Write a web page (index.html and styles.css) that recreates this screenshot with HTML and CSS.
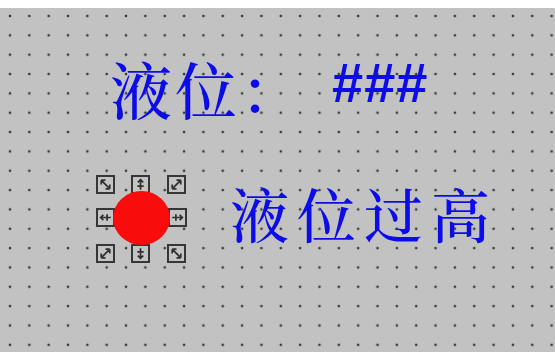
FILE: index.html
```html
<!DOCTYPE html>
<html lang="zh">
  <head>
    <meta charset="UTF-8" />
    <title>液位</title>
    <link rel="stylesheet" href="styles.css">
  </head>
  <body>
    <div class="ruler"></div>
    <div class="canvas">
      <!-- 文本标签 -->
      <div class="label label-level">液位：</div>
      <div class="label label-value">###</div>
      <div class="label label-alarm">液位过高</div>

      <!-- 选中的指示灯及控制点 -->
      <div class="handle h-tl"><svg viewBox="0 0 14 14"><path d="M3 3L11 11M3 3h4M3 3v4M11 11h-4M11 11v-4"/></svg></div>
      <div class="handle h-tm"><svg viewBox="0 0 14 14"><path d="M7 2.5V12M4.5 5L7 2.5L9.5 5M4 8.5h6"/></svg></div>
      <div class="handle h-tr"><svg viewBox="0 0 14 14"><path d="M11 3L3 11M11 3h-4M11 3v4M3 11h4M3 11v-4"/></svg></div>
      <div class="handle h-ml"><svg viewBox="0 0 14 14"><path d="M2.5 7H12M5 4.5L2.5 7L5 9.5M8.5 4v6"/></svg></div>
      <div class="handle h-mr"><svg viewBox="0 0 14 14"><path d="M11.5 7H2M9 4.5L11.5 7L9 9.5M5.5 4v6"/></svg></div>
      <div class="handle h-bl"><svg viewBox="0 0 14 14"><path d="M11 3L3 11M11 3h-4M11 3v4M3 11h4M3 11v-4"/></svg></div>
      <div class="handle h-bm"><svg viewBox="0 0 14 14"><path d="M7 11.5V2M4.5 9L7 11.5L9.5 9M4 5.5h6"/></svg></div>
      <div class="handle h-br"><svg viewBox="0 0 14 14"><path d="M3 3L11 11M3 3h4M3 3v4M11 11h-4M11 11v-4"/></svg></div>
      <div class="lamp"></div>
    </div>
  </body>
</html>
```

FILE: styles.css
```css
* {
  margin: 0px;
  padding: 0px;
  box-sizing: border-box;
}
body {
  width: 555px;
  height: 352px;
  overflow: hidden;
  background-color: #c2c2c2;
  display: flex;
  flex-direction: column;
}
.ruler {
  height: 8px;
  background-color: #ffffff;
}
/* 画布：点阵网格 */
.canvas {
  flex: 1;
  position: relative;
  margin-left: 1px;
  background-color: #c2c2c2;
  background-image: radial-gradient(circle, #3a3a3a 0px, #3a3a3a 0.9px, rgba(58, 58, 58, 0) 1.7px);
  background-size: 19.35px 19.35px;
  background-position: -0.7px -1.7px;
}
.label {
  position: absolute;
  color: #0c0ce8;
  white-space: nowrap;
  font-family: "Noto Serif CJK SC", "Noto Sans CJK SC", serif;
  font-weight: 500;
  line-height: 1;
}
.label-level {
  left: 109px;
  top: 50px;
  font-size: 62px;
  letter-spacing: 3px;
}
.label-value {
  left: 331px;
  top: 47px;
  font-family: "Liberation Sans", Arial, sans-serif;
  font-weight: bold;
  font-size: 56px;
  letter-spacing: 1px;
}
.label-alarm {
  left: 229px;
  top: 175px;
  font-size: 59px;
  letter-spacing: 8px;
}
.handle {
  position: absolute;
  width: 19px;
  height: 19px;
  border: 2px solid #363636;
  background-color: #c4c4c4;
}
.handle svg {
  display: block;
  width: 15px;
  height: 15px;
  fill: none;
  stroke: #303030;
  stroke-width: 1.6;
}
.h-tl { left: 95px; top: 167px; }
.h-tm { left: 130px; top: 167px; }
.h-tr { left: 166px; top: 167px; }
.h-ml { left: 95px; top: 200px; }
.h-mr { left: 167px; top: 200px; }
.h-bl { left: 95px; top: 236px; }
.h-bm { left: 130px; top: 236px; }
.h-br { left: 166px; top: 236px; }
.lamp {
  position: absolute;
  left: 112px;
  top: 183px;
  width: 57px;
  height: 54px;
  border-radius: 50%;
  background-color: #f80c0c;
}
```
